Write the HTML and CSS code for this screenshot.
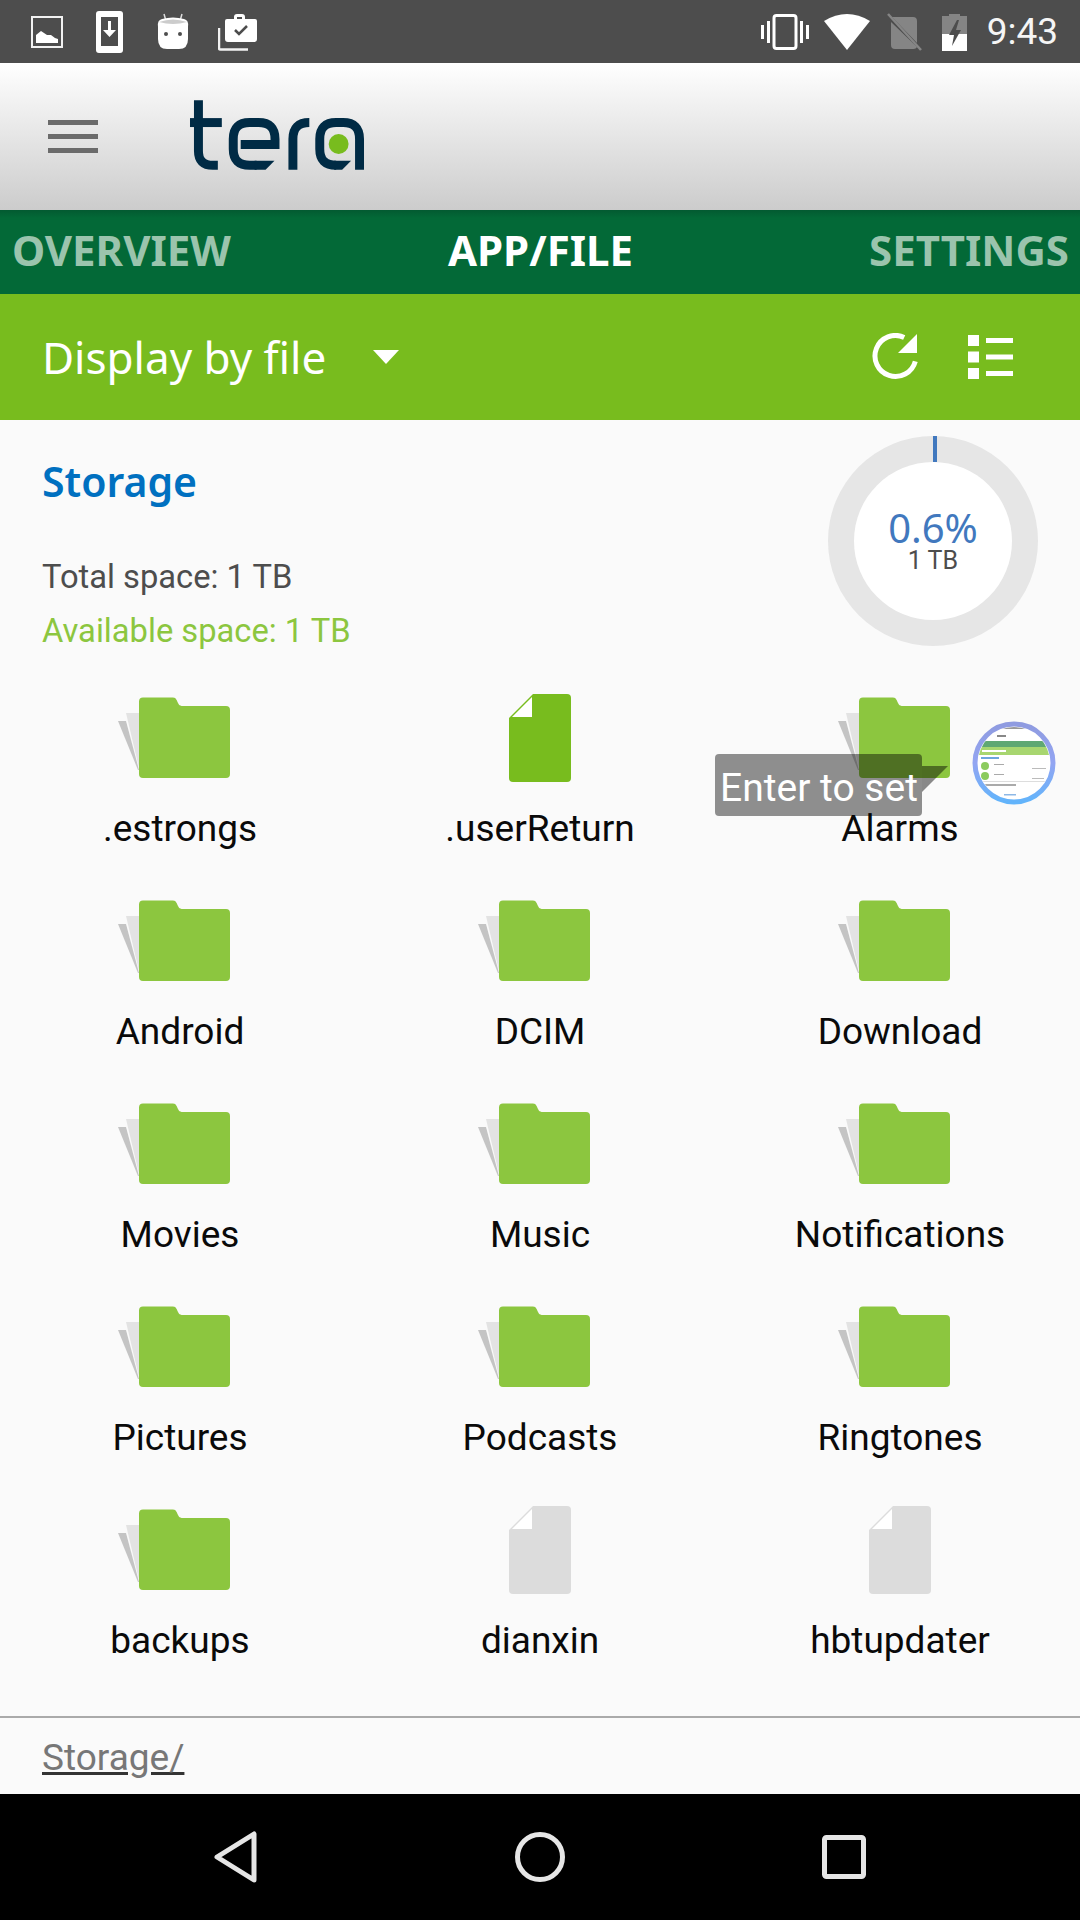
FILE: index.html
```html
<!DOCTYPE html>
<html lang="en">
<head>
    <meta charset="UTF-8">
    <meta name="viewport" content="width=device-width, initial-scale=1.0">
    <title>tera</title>
    <link rel="stylesheet" href="styles.css">
</head>
<body>
    <svg class="defs" width="0" height="0">
        <symbol id="folder" viewBox="0 0 128 88">
            <path d="M10 19H23V74Z" fill="#e3e3e3"/>
            <path d="M2 27H10L23 76H22Z" fill="#c4c4c4"/>
            <path d="M23 7.500a4 4 0 0 1 4-4H57a4 4 0 0 1 3.600 2.400L62 9a4 4 0 0 0 3.600 3H110a4 4 0 0 1 4 4V80a4 4 0 0 1-4 4H27a4 4 0 0 1-4-4Z" fill="#8cc63f"/>
        </symbol>
        <symbol id="file-green" viewBox="0 0 128 88">
            <path d="M33 24L57 0H91a4 4 0 0 1 4 4V84a4 4 0 0 1-4 4H37a4 4 0 0 1-4-4Z" fill="#78bc1e"/>
            <path d="M36 23L56 3V23Z" fill="#fff"/>
        </symbol>
        <symbol id="file-grey" viewBox="0 0 128 88">
            <path d="M33 24L57 0H91a4 4 0 0 1 4 4V84a4 4 0 0 1-4 4H37a4 4 0 0 1-4-4Z" fill="#dcdcdc"/>
            <path d="M36 23L56 3V23Z" fill="#fff"/>
        </symbol>
    </svg>

    <div class="screen">
        <!-- android status bar -->
        <div class="status-bar">
            <div class="status-left">
                <svg width="32" height="32" viewBox="0 0 32 32"><rect x="1" y="1" width="30" height="30" fill="none" stroke="#f2f2f2" stroke-width="2"/><path d="M5 27V19l5-4 6 4 4 0 4 3 3 1v4Z" fill="#fff"/></svg>
                <svg width="28" height="42" viewBox="0 0 28 42"><rect x="0" y="0" width="27" height="42" rx="3" fill="#fff"/><rect x="5" y="6" width="17" height="29" fill="#4d4d4d"/><path d="M12 10h3v9h5l-6.500 7-6.500-7h5Z" fill="#fff"/></svg>
                <svg width="32" height="38" viewBox="0 0 32 38"><path d="M7 1l2 7M25 1l-2 7" stroke="#ddd" stroke-width="1.500"/><path d="M5 6Q16 3 27 6Q32 7 31 14L31 26Q31 36 22 36H10Q1 36 1 26V14Q0 7 5 6Z" fill="#fff"/><path d="M2 9Q16 4 30 9Q16 13 2 9Z" fill="#ccc"/><circle cx="9" cy="21" r="2" fill="#4d4d4d"/><circle cx="23" cy="21" r="2" fill="#4d4d4d"/></svg>
                <svg class="work-icon" width="40" height="38" viewBox="0 0 40 38"><path d="M1 15V35a1.500 1.500 0 0 0 1.500 1.500H30" fill="none" stroke="#f2f2f2" stroke-width="2.500"/><path d="M16 6V4a3 3 0 0 1 3-3h5a3 3 0 0 1 3 3v2h10a2 2 0 0 1 2 2V26a3 3 0 0 1-3 3H10a3 3 0 0 1-3-3V8a2 2 0 0 1 2-2Z" fill="#fff"/><path d="M17 17l4 4 8-8" fill="none" stroke="#4d4d4d" stroke-width="2.500"/><rect x="19" y="4" width="5" height="2" fill="#4d4d4d"/></svg>
            </div>
            <div class="status-right">
                <svg width="48" height="36" viewBox="0 0 48 36"><rect x="13" y="1.500" width="22" height="33" rx="2.500" fill="none" stroke="#fff" stroke-width="3"/><rect x="0" y="11" width="3" height="14" fill="#fff"/><rect x="6" y="7" width="3" height="22" fill="#fff"/><rect x="45" y="11" width="3" height="14" fill="#fff"/><rect x="39" y="7" width="3" height="22" fill="#fff"/></svg>
                <svg class="wifi-icon" width="46" height="36" viewBox="0 0 46 36"><path d="M0 7Q23-7 46 7L23 36Z" fill="#fff"/></svg>
                <svg class="sim-icon" width="36" height="38" viewBox="0 0 36 38"><path d="M5 4H26a4 4 0 0 1 4 4V30ZM30 34a4 4 0 0 1-4 2H8a4 4 0 0 1-4-4V9Z" fill="#858585"/><path d="M1 1L34 37" stroke="#858585" stroke-width="2.500"/></svg>
                <svg width="26" height="38" viewBox="0 0 26 38"><path d="M7 3V1h11v2h7v35H0V3Z" fill="#858585"/><path d="M0 21H25V38H0Z" fill="#fff"/><path d="M15 7L7 22h5L10 33 19 17h-5l3-10Z" fill="#4d4d4d"/></svg>
                <span class="clock">9:43</span>
            </div>
        </div>

        <header class="app-header">
            <svg class="menu-icon" width="50" height="33" viewBox="0 0 50 33"><rect width="50" height="5" y="0"/><rect width="50" height="5" y="14"/><rect width="50" height="5" y="28"/></svg>
            <svg class="logo" width="176" height="72" viewBox="188 100 177 72" role="img" aria-label="tera">
                <g fill="none" stroke="#002b45" stroke-width="9">
                    <path d="M197.500 101V152Q197.500 166.500 212 166.500H217"/>
                    <path d="M240 145.500H274.500V140Q274.500 123.500 258 123.500H249Q232.500 123.500 232.500 140V150Q232.500 166.500 249 166.500H256"/>
                    <path d="M292.500 171V140Q292.500 123.500 309 123.500"/>
                    <path d="M359.500 171V140Q359.500 123.500 343 123.500H336Q319.500 123.500 319.500 140V150Q319.500 166.500 336 166.500H335"/>
                </g>
                <g fill="#002b45">
                    <rect x="189" y="119" width="32" height="9"/>
                    <path d="M254 162H274L265 171H254Z"/>
                    <path d="M334 162H351L342 171H334Z"/>
                </g>
                <circle cx="338.500" cy="145" r="10" fill="#78bc1e"/>
            </svg>
        </header>

        <nav class="tabs">
            <span class="tab">OVERVIEW</span>
            <span class="tab active">APP/FILE</span>
            <span class="tab last">SETTINGS</span>
        </nav>

        <div class="toolbar">
            <div class="display-select">
                <span>Display by file</span>
                <i class="caret"></i>
            </div>
            <div class="toolbar-icons">
                <svg width="46" height="48" viewBox="0 0 46 48"><path d="M43.300 28.300A20.500 20.500 0 1 1 32.200 4.400" fill="none" stroke="#fff" stroke-width="5"/><path d="M45 1V20H26Z" fill="#fff"/></svg>
                <svg width="45" height="44" viewBox="0 0 45 44"><rect width="11" height="11" y="0" fill="#fff"/><rect width="11" height="11" y="16.500" fill="#fff"/><rect width="11" height="11" y="33" fill="#fff"/><rect x="18" y="3" width="27" height="5" fill="#fff"/><rect x="18" y="19.500" width="27" height="5" fill="#fff"/><rect x="18" y="36" width="27" height="5" fill="#fff"/></svg>
            </div>
        </div>

        <main class="content">
            <section class="storage">
                <div class="storage-info">
                    <h2>Storage</h2>
                    <p class="total">Total space: 1 TB</p>
                    <p class="available">Available space: 1 TB</p>
                </div>
                <div class="donut">
                    <i class="donut-tick"></i>
                    <div class="donut-inner">
                        <span class="percent">0.6%</span>
                        <span class="size">1 TB</span>
                    </div>
                </div>
            </section>

            <div class="file-grid">
                <div class="item"><svg class="item-icon"><use href="#folder"/></svg><span>.estrongs</span></div>
                <div class="item"><svg class="item-icon"><use href="#file-green"/></svg><span>.userReturn</span></div>
                <div class="item"><svg class="item-icon"><use href="#folder"/></svg><span>Alarms</span></div>
                <div class="item"><svg class="item-icon"><use href="#folder"/></svg><span>Android</span></div>
                <div class="item"><svg class="item-icon"><use href="#folder"/></svg><span>DCIM</span></div>
                <div class="item"><svg class="item-icon"><use href="#folder"/></svg><span>Download</span></div>
                <div class="item"><svg class="item-icon"><use href="#folder"/></svg><span>Movies</span></div>
                <div class="item"><svg class="item-icon"><use href="#folder"/></svg><span>Music</span></div>
                <div class="item"><svg class="item-icon"><use href="#folder"/></svg><span>Notifications</span></div>
                <div class="item"><svg class="item-icon"><use href="#folder"/></svg><span>Pictures</span></div>
                <div class="item"><svg class="item-icon"><use href="#folder"/></svg><span>Podcasts</span></div>
                <div class="item"><svg class="item-icon"><use href="#folder"/></svg><span>Ringtones</span></div>
                <div class="item"><svg class="item-icon"><use href="#folder"/></svg><span>backups</span></div>
                <div class="item"><svg class="item-icon"><use href="#file-grey"/></svg><span>dianxin</span></div>
                <div class="item"><svg class="item-icon"><use href="#file-grey"/></svg><span>hbtupdater</span></div>
            </div>

            <div class="breadcrumb"><span>Storage/</span></div>

            <!-- things floating over the grid -->
            <svg class="toast-shadow" width="28" height="26" viewBox="0 0 28 26"><path d="M0 0H26L0 26Z" fill="#000" opacity="0.45"/></svg>
            <div class="toast">Enter to set</div>
            <svg class="float-ball" width="84" height="84" viewBox="0 0 84 84">
                <defs>
                    <linearGradient id="ring" x1="0" y1="0" x2="0" y2="1">
                        <stop offset="0" stop-color="#8f9be0"/>
                        <stop offset="0.5" stop-color="#93a5f2"/>
                        <stop offset="1" stop-color="#62b4fb"/>
                    </linearGradient>
                    <clipPath id="ball-clip"><circle cx="42" cy="42" r="36"/></clipPath>
                </defs>
                <circle cx="42" cy="42" r="39" fill="#fff" stroke="url(#ring)" stroke-width="5"/>
                <g clip-path="url(#ball-clip)">
                    <rect x="0" y="6" width="84" height="2" fill="#999"/>
                    <rect x="25" y="14" width="9" height="2" fill="#888"/>
                    <rect x="4" y="20" width="76" height="6" fill="#5fa873"/>
                    <rect x="4" y="26" width="76" height="8" fill="#a8d670"/>
                    <rect x="10" y="29" width="24" height="2" fill="#fff"/>
                    <rect x="9" y="36" width="18" height="2" fill="#6da6de"/>
                    <circle cx="13" cy="45" r="4" fill="#8ccb5e"/>
                    <circle cx="13" cy="55" r="4" fill="#8ccb5e"/>
                    <rect x="22" y="43" width="10" height="1" fill="#aaa"/>
                    <rect x="22" y="53" width="10" height="1" fill="#aaa"/>
                    <rect x="60" y="47" width="14" height="1" fill="#bbb"/>
                    <rect x="60" y="57" width="12" height="1" fill="#bbb"/>
                    <rect x="8" y="60" width="68" height="1" fill="#ddd"/>
                    <rect x="10" y="63" width="34" height="2" fill="#aaa"/>
                    <rect x="32" y="73" width="12" height="1.500" fill="#8db8e6"/>
                </g>
            </svg>
        </main>

        <!-- android nav bar -->
        <footer class="nav-bar">
            <svg width="44" height="52" viewBox="0 0 44 52"><path d="M40 3V49L3 26Z" fill="none" stroke="#e6e6e6" stroke-width="5" stroke-linejoin="round"/></svg>
            <svg width="50" height="50" viewBox="0 0 50 50"><circle cx="25" cy="25" r="22.500" fill="none" stroke="#e6e6e6" stroke-width="5"/></svg>
            <svg width="44" height="44" viewBox="0 0 44 44"><rect x="2.500" y="2.500" width="39" height="39" rx="2" fill="none" stroke="#e6e6e6" stroke-width="5"/></svg>
        </footer>
    </div>
</body>
</html>
```

FILE: styles.css
```css
* {
    box-sizing: border-box;
}

body {
    margin: 0;
    font-family: Roboto, sans-serif;
    background-color: #fafafa;
}

.defs {
    display: block;
    height: 0;
}

.screen {
    display: flex;
    flex-direction: column;
    width: 1080px;
    height: 1920px;
    overflow: hidden;
}

/* status bar */
.status-bar {
    display: flex;
    justify-content: space-between;
    align-items: center;
    height: 63px;
    padding: 0 22px 0 31px;
    background-color: #4d4d4d;
}

.status-left,
.status-right {
    display: flex;
    align-items: center;
}

.status-left {
    gap: 33px;
}

.work-icon {
    margin-left: -4px;
}

.status-right {
    gap: 17px;
}

.wifi-icon {
    margin-left: -2px;
    margin-right: 2px;
}

.sim-icon {
    margin-left: -2px;
    margin-right: 2px;
}

.clock {
    margin-left: 2px;
    font-size: 37px;
    color: #f5f5f5;
}

/* header */
.app-header {
    display: flex;
    align-items: center;
    height: 147px;
    padding-left: 48px;
    background: linear-gradient(#ffffff, #cccccc);
}

.menu-icon {
    fill: #6b6b6b;
    margin-top: -1px;
}

.logo {
    margin-left: 91px;
    margin-top: -3px;
}

/* tabs */
.tabs {
    display: grid;
    grid-template-columns: 1fr auto 1fr;
    align-items: center;
    height: 84px;
    padding: 0 11px 5px 12px;
    background: linear-gradient(#035a31 0, #036937 8px);
}

.tab {
    font-family: "Noto Sans", sans-serif;
    font-size: 42px;
    font-weight: 700;
    color: #9bc4ad;
}

.tab.active {
    color: #fff;
}

.tab.last {
    justify-self: end;
}

/* green toolbar */
.toolbar {
    display: flex;
    justify-content: space-between;
    align-items: center;
    height: 126px;
    padding: 0 67px 0 42px;
    background-color: #78bc1e;
}

.display-select {
    display: flex;
    align-items: center;
    gap: 47px;
    font-family: "Noto Sans", sans-serif;
    font-size: 44px;
    color: #fff;
}

.caret {
    width: 0;
    height: 0;
    border-left: 13px solid transparent;
    border-right: 13px solid transparent;
    border-top: 14px solid #fff;
}

.toolbar-icons {
    display: flex;
    align-items: center;
    gap: 50px;
}

/* main area */
.content {
    position: relative;
    flex: 1;
    display: flex;
    flex-direction: column;
    background-color: #fafafa;
}

.storage {
    display: flex;
    justify-content: space-between;
    height: 259px;
    padding: 16px 42px 0 42px;
}

.storage-info h2 {
    margin: 19px 0 0;
    font-family: "Noto Sans", sans-serif;
    font-size: 41px;
    font-weight: 600;
    line-height: 52px;
    color: #0070c0;
}

.storage-info p {
    margin: 0;
    font-size: 32.700px;
    line-height: 54px;
}

.total {
    padding-top: 43px;
    color: #4d4d4d;
}

.available {
    color: #8cc63f;
}

.donut {
    position: relative;
    display: flex;
    justify-content: center;
    align-items: center;
    width: 210px;
    height: 210px;
    border-radius: 50%;
    background-color: #e6e6e6;
}

.donut-tick {
    position: absolute;
    left: 105px;
    top: 0;
    width: 4px;
    height: 26px;
    background-color: #4178be;
}

.donut-inner {
    display: flex;
    flex-direction: column;
    align-items: center;
    justify-content: center;
    width: 158px;
    height: 158px;
    border-radius: 50%;
    background-color: #fff;
}

.percent {
    font-family: "Noto Sans", sans-serif;
    font-size: 40px;
    line-height: 40px;
    color: #4178be;
}

.size {
    font-size: 25px;
    line-height: 26px;
    color: #4d4d4d;
}

/* file grid */
.file-grid {
    display: grid;
    grid-template-columns: repeat(3, 360px);
    grid-auto-rows: 203px;
    height: 1039px;
    border-bottom: 2px solid #aaa;
}

.item {
    display: flex;
    flex-direction: column;
    align-items: center;
    padding-top: 15px;
    font-size: 37px;
    color: #0a0a0a;
}

.item-icon {
    width: 128px;
    height: 88px;
}

.item span {
    margin-top: 25px;
    line-height: 44px;
}

.breadcrumb {
    flex: 1;
    display: flex;
    align-items: center;
    padding: 2px 0 0 42px;
    font-size: 37px;
    color: #777;
}

.breadcrumb span {
    text-decoration: underline;
    text-decoration-color: #333;
}

/* floating things */
.toast {
    position: absolute;
    left: 715px;
    top: 334px;
    width: 207px;
    height: 62px;
    padding-left: 5px;
    border-radius: 4px;
    font-size: 39px;
    line-height: 68px;
    color: #fff;
    background-color: rgba(0, 0, 0, 0.43);
    white-space: nowrap;
}

.toast-shadow {
    position: absolute;
    left: 922px;
    top: 346px;
}

.float-ball {
    position: absolute;
    left: 972px;
    top: 301px;
    filter: blur(0.5px);
}

/* nav bar */
.nav-bar {
    display: flex;
    align-items: center;
    height: 126px;
    padding: 0 214px 0 214px;
    justify-content: space-between;
    background-color: #000;
}
```
